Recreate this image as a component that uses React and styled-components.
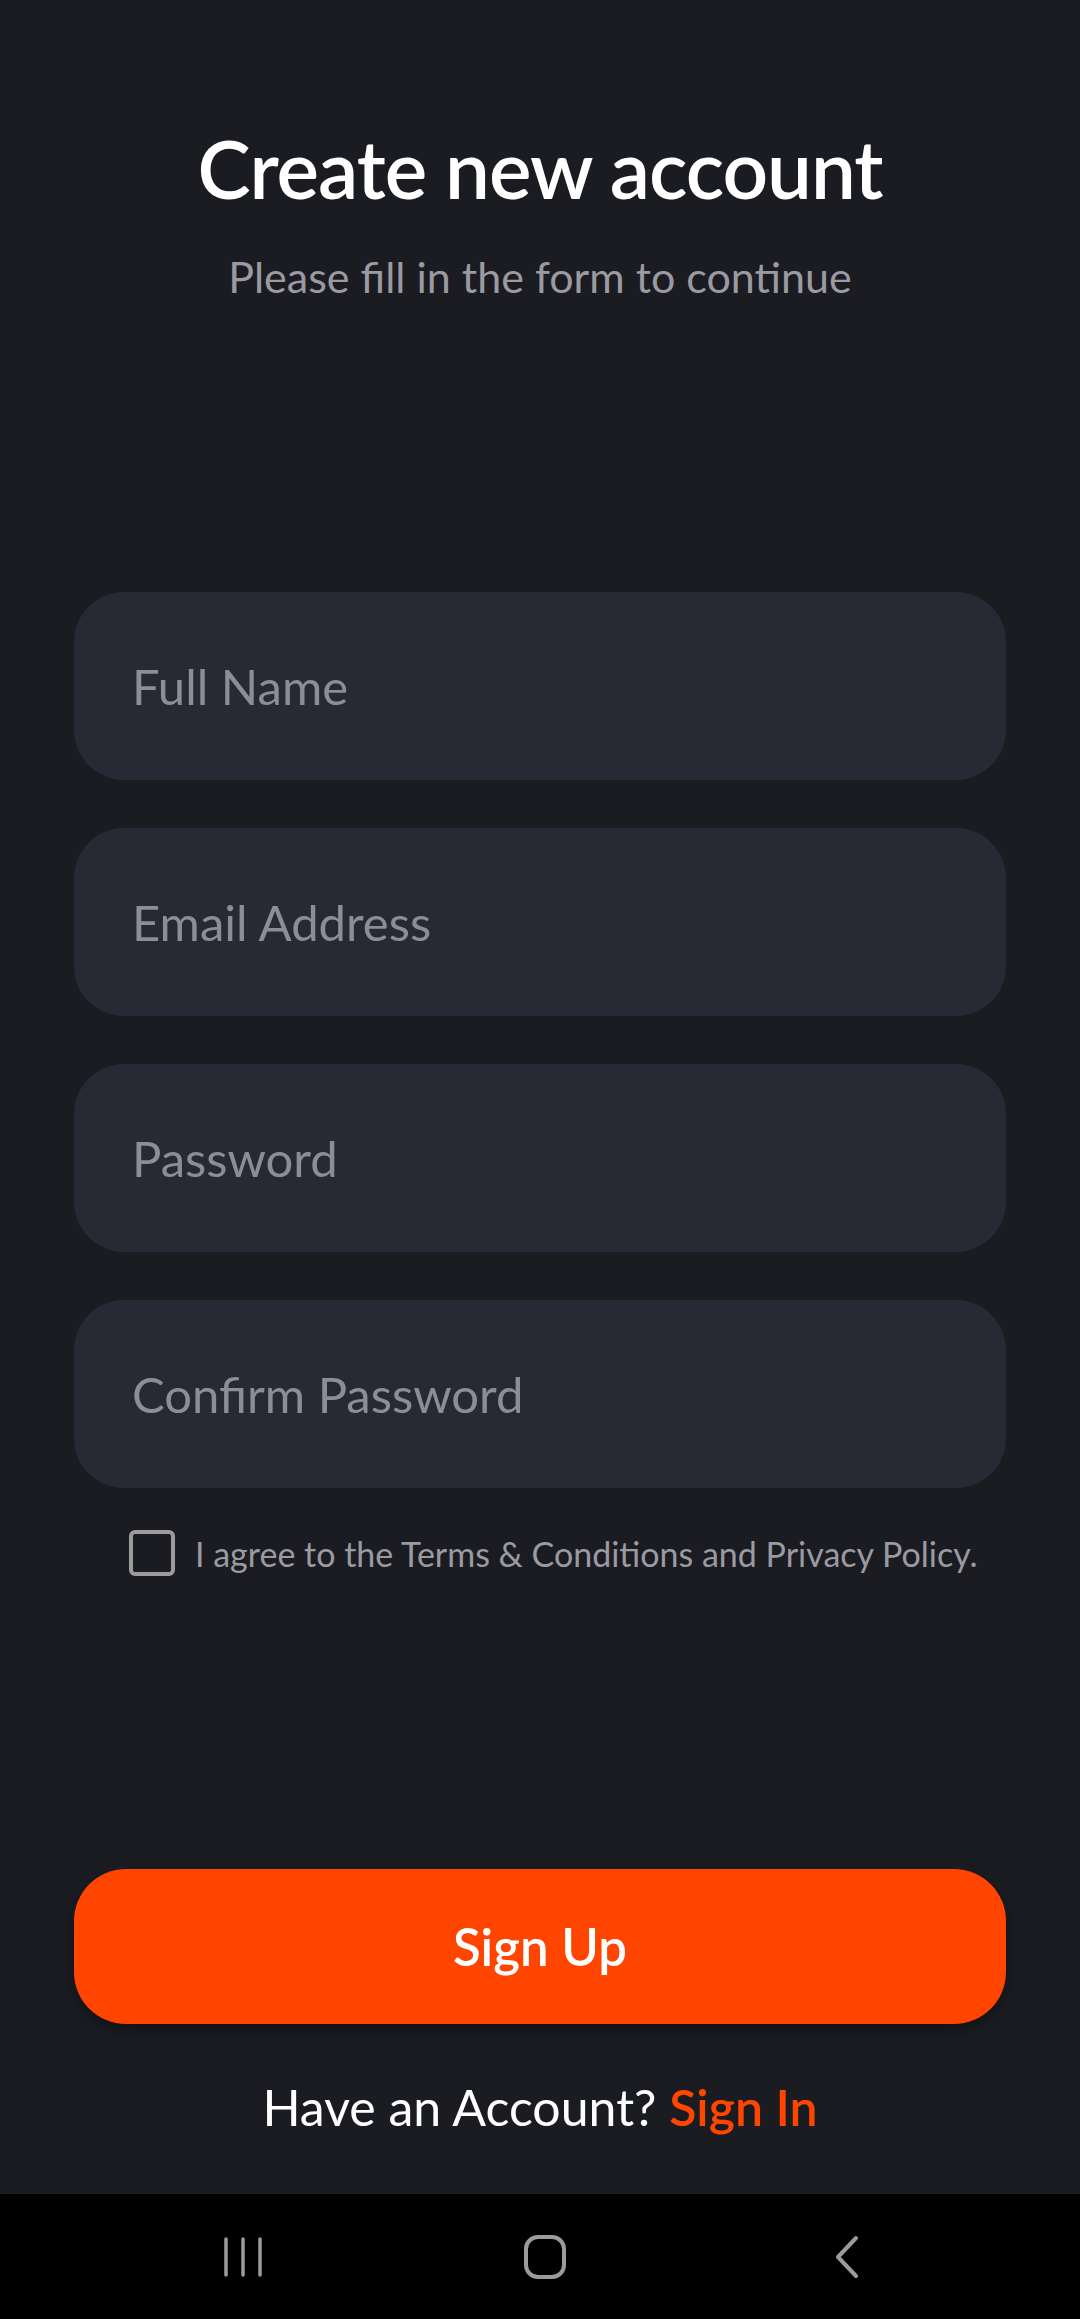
import React, { useState } from 'react'
import styled, { createGlobalStyle } from 'styled-components'

const colors = {
	bg: '#1a1c22',
	field: '#272a35',
	placeholder: '#8c8d95',
	muted: '#9a9aa0',
	white: '#ffffff',
	orange: '#ff4500',
	nav: '#000000',
	navIcon: '#9b9b9b'
}

const GlobalStyle = createGlobalStyle`
	* { box-sizing: border-box; }
	html, body { margin: 0; padding: 0; background: ${colors.bg}; }
	body { font-family: Lato, "Noto Sans", "Liberation Sans", sans-serif; }
`

const fields = [
	{ id: 1, placeholder: 'Full Name', type: 'text' },
	{ id: 2, placeholder: 'Email Address', type: 'email' },
	{ id: 3, placeholder: 'Password', type: 'password' },
	{ id: 4, placeholder: 'Confirm Password', type: 'password' }
]

export default function App() {
	const [agreed, setAgreed] = useState(false)

	return (
		<Screen>
			<GlobalStyle />
			<Content>
				<Header>
					<Title>Create new account</Title>
					<Subtitle>Please fill in the form to continue</Subtitle>
				</Header>

				<Form onSubmit={(e) => e.preventDefault()}>
					{fields.map((f) => (
						<Field key={f.id} type={f.type} placeholder={f.placeholder} />
					))}
					<Agree>
						<Box type="button" $checked={agreed} onClick={() => setAgreed(!agreed)} />
						<span>I agree to the Terms &amp; Conditions and Privacy Policy.</span>
					</Agree>
				</Form>

				<Footer>
					<PrimaryButton type="button">Sign Up</PrimaryButton>
					<SwitchLine>
						Have an Account? <a href="#signin">Sign In</a>
					</SwitchLine>
				</Footer>
			</Content>

			<NavBar>
				<svg width="42" height="44" viewBox="0 0 42 44">
					<g stroke={colors.navIcon} strokeWidth="3.5" strokeLinecap="round">
						<line x1="4" y1="4" x2="4" y2="40" />
						<line x1="21" y1="4" x2="21" y2="40" />
						<line x1="38" y1="4" x2="38" y2="40" />
					</g>
				</svg>
				<HomeIcon width="44" height="46" viewBox="0 0 44 46">
					<rect x="3" y="3" width="38" height="40" rx="12" fill="none" stroke={colors.navIcon} strokeWidth="4" />
				</HomeIcon>
				<svg width="28" height="46" viewBox="0 0 28 46">
					<polyline points="23,4 5,23 23,42" fill="none" stroke={colors.navIcon} strokeWidth="4" strokeLinecap="round" strokeLinejoin="round" />
				</svg>
			</NavBar>
		</Screen>
	)
}

const Screen = styled.div`
	min-height: 2319px;
	display: flex;
	flex-direction: column;
	background: ${colors.bg};
`

const Content = styled.main`
	flex: 1;
	display: flex;
	flex-direction: column;
	padding: 0 74px;
`

const Header = styled.header`
	margin-top: 122px;
	display: flex;
	flex-direction: column;
	align-items: center;
	gap: 38px;
`

const Title = styled.h1`
	margin: 0;
	color: ${colors.white};
	font-size: 80px;
	line-height: 92px;
	font-weight: 600;
	letter-spacing: -1px;
`

const Subtitle = styled.p`
	margin: 0;
	color: ${colors.muted};
	font-size: 43px;
	line-height: 50px;
	font-weight: 400;
`

const Form = styled.form`
	margin-top: 290px;
	display: flex;
	flex-direction: column;
	gap: 48px;
`

const Field = styled.input`
	height: 188px;
	width: 100%;
	border: none;
	outline: none;
	border-radius: 50px;
	background: ${colors.field};
	padding: 0 58px;
	font-family: inherit;
	font-size: 49px;
	color: ${colors.white};

	&::placeholder {
		color: ${colors.placeholder};
	}
`

const Agree = styled.label`
	margin-top: -7px;
	display: flex;
	align-items: center;
	gap: 20px;
	padding-left: 55px;
	height: 48px;
	color: ${colors.muted};
	font-size: 34px;
`

const Box = styled.button`
	width: 46px;
	height: 46px;
	flex-shrink: 0;
	padding: 0;
	border: 4px solid ${colors.navIcon};
	border-radius: 6px;
	background: ${(p) => (p.$checked ? colors.orange : 'transparent')};
`

const Footer = styled.div`
	margin-top: auto;
	margin-bottom: 58px;
	display: flex;
	flex-direction: column;
	align-items: center;
	gap: 54px;
`

const PrimaryButton = styled.button`
	width: 100%;
	height: 155px;
	border: none;
	border-radius: 52px;
	background: ${colors.orange};
	color: ${colors.white};
	font-family: inherit;
	font-size: 51px;
	font-weight: 600;
	box-shadow: 0 6px 14px rgba(0, 0, 0, 0.35);
`

const SwitchLine = styled.p`
	margin: 0;
	color: ${colors.white};
	font-size: 50px;
	line-height: 58px;

	a {
		color: ${colors.orange};
		font-weight: 600;
		text-decoration: none;
	}
`

const NavBar = styled.nav`
	height: 125px;
	background: ${colors.nav};
	display: flex;
	align-items: center;
	justify-content: space-between;
	padding: 0 219px 0 222px;
`

const HomeIcon = styled.svg`
	margin-right: 8px;
`
